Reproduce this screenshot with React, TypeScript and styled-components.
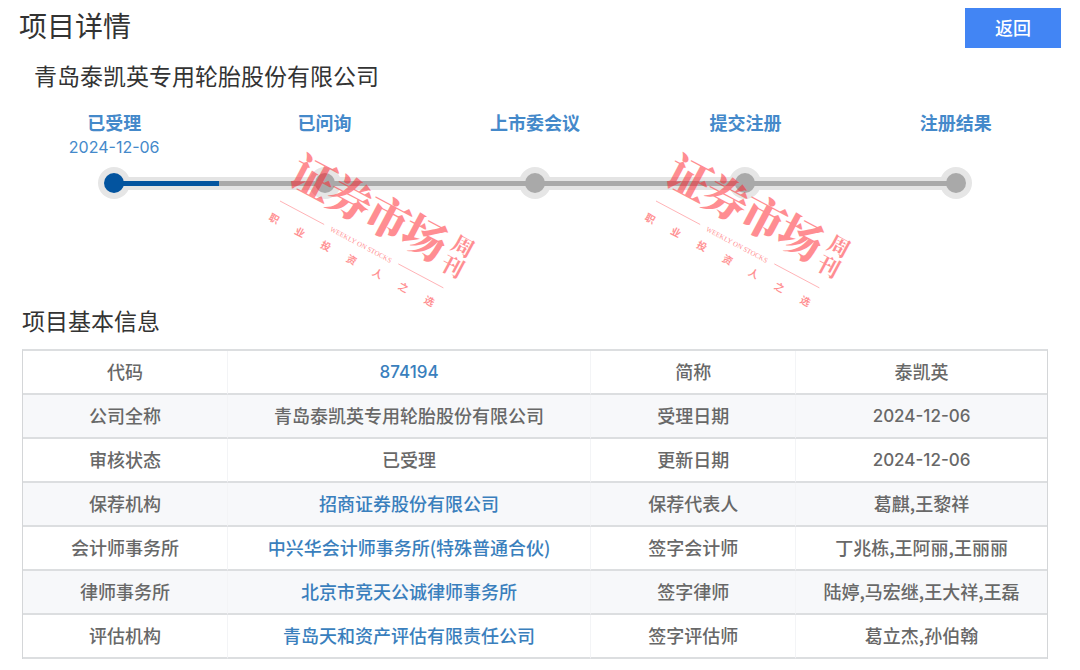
import React from "react";
import styled, { createGlobalStyle } from "styled-components";

const GlobalStyle = createGlobalStyle`
  *, *::before, *::after { box-sizing: border-box; }
  body {
    margin: 0;
    background: #fff;
    color: #333;
    font-family: "Noto Sans CJK SC", sans-serif;
  }
`;

const Page = styled.main`
  padding: 8px 0 12px;
`;

const Header = styled.header`
  display: flex;
  align-items: flex-start;
  justify-content: space-between;
  padding: 0 19px 0 19px;
`;

const Title = styled.h1`
  margin: 0;
  font-size: 28px;
  line-height: 34px;
  font-weight: 400;
`;

const BackButton = styled.button`
  width: 96px;
  height: 40px;
  padding: 0 0 3px;
  border: 0;
  background: #4285f4;
  color: #fff;
  font-family: inherit;
  font-size: 18px;
  font-weight: 500;
  cursor: pointer;
`;

const Subtitle = styled.h2<{ $indent: number; $top: number }>`
  margin: ${(p) => p.$top}px 0 0;
  padding-left: ${(p) => p.$indent}px;
  font-size: 23px;
  line-height: 32px;
  font-weight: 400;
`;

const Progress = styled.section`
  position: relative;
  padding: 19px 19px 0 9px;
`;

const Steps = styled.ol`
  position: relative;
  display: grid;
  grid-template-columns: repeat(5, 1fr);
  margin: 0;
  padding: 0;
  list-style: none;
`;

const Step = styled.li`
  display: flex;
  flex-direction: column;
  align-items: center;
  color: #4489ca;
`;

const StepName = styled.strong`
  font-size: 18px;
  line-height: 24px;
  font-weight: 700;
`;

const StepDate = styled.time`
  height: 26px;
  font-family: Inter, sans-serif;
  font-size: 16px;
  line-height: 26px;
`;

const Halo = styled.span`
  display: flex;
  align-items: center;
  justify-content: center;
  width: 32px;
  height: 32px;
  margin-top: 7px;
  border-radius: 50%;
  background: #e6e6e6;
`;

const Dot = styled.span<{ $active: boolean }>`
  position: relative;
  z-index: 2;
  width: 20px;
  height: 20px;
  border-radius: 50%;
  background: ${(p) => (p.$active ? "#03549f" : "#a9a9a9")};
`;

const RailBed = styled.span`
  position: absolute;
  left: 10%;
  right: 10%;
  bottom: 9px;
  height: 13px;
  background: #e4e4e4;
`;

const Rail = styled.span`
  position: absolute;
  z-index: 1;
  left: 10%;
  right: 10%;
  bottom: 13px;
  height: 5px;
  background: linear-gradient(to right, #03549f 12.5%, #a9a9a9 12.5%);
`;

const Stamp = styled.svg<{ $left: string }>`
  position: absolute;
  z-index: 3;
  top: 24px;
  left: ${(p) => p.$left};
  width: 230px;
  height: 200px;
  pointer-events: none;
`;

const TableWrap = styled.div`
  padding: 13px 32px 0 22px;
`;

const Table = styled.table`
  width: 100%;
  table-layout: fixed;
  border-collapse: separate;
  border-spacing: 0;
  border: 1px solid #d4d6d8;
  border-top: 2px solid #dcdee0;
  border-bottom-width: 0;
  color: #686868;
  font-size: 18px;
  line-height: 26px;
  text-align: center;
`;

const Row = styled.tr`
  &:nth-child(even) { background: #f7f8fa; }
`;

const cell = `
  height: 44px;
  padding: 0 4px 2px;
  border-bottom: 2px solid #dcdee0;
  font-weight: 500;
`;

const Label = styled.th`
  ${cell}
  border-right: 1px solid #f3f4f6;
`;

const Value = styled.td`
  ${cell}
  &:nth-child(2) { border-right: 1px solid #f3f4f6; }
`;

const Numeric = styled.span`
  font-family: Inter, sans-serif;
  font-size: 17px;
`;

const Link = styled.a`
  color: #3a7fbd;
  text-decoration: none;
`;

const steps = [
  { name: "已受理", date: "2024-12-06" },
  { name: "已问询" },
  { name: "上市委会议" },
  { name: "提交注册" },
  { name: "注册结果" },
];

type Info = { label: string; value: string; link?: boolean };

const rows: [Info, Info][] = [
  [{ label: "代码", value: "874194", link: true }, { label: "简称", value: "泰凯英" }],
  [{ label: "公司全称", value: "青岛泰凯英专用轮胎股份有限公司" }, { label: "受理日期", value: "2024-12-06" }],
  [{ label: "审核状态", value: "已受理" }, { label: "更新日期", value: "2024-12-06" }],
  [{ label: "保荐机构", value: "招商证券股份有限公司", link: true }, { label: "保荐代表人", value: "葛麒,王黎祥" }],
  [{ label: "会计师事务所", value: "中兴华会计师事务所(特殊普通合伙)", link: true }, { label: "签字会计师", value: "丁兆栋,王阿丽,王丽丽" }],
  [{ label: "律师事务所", value: "北京市竞天公诚律师事务所", link: true }, { label: "签字律师", value: "陆婷,马宏继,王大祥,王磊" }],
  [{ label: "评估机构", value: "青岛天和资产评估有限责任公司", link: true }, { label: "签字评估师", value: "葛立杰,孙伯翰" }],
];

function InfoCells({ label, value, link }: Info) {
  const text = /^[\d-]+$/.test(value) ? <Numeric>{value}</Numeric> : value;
  return (
    <>
      <Label scope="row">{label}</Label>
      <Value>{link ? <Link href="#">{text}</Link> : text}</Value>
    </>
  );
}

function Watermark({ left }: { left: string }) {
  return (
    <Stamp $left={left} viewBox="0 0 230 200" aria-hidden="true">
      <g
        transform="translate(20 86) rotate(28)"
        fill="#ff1e28"
        opacity="0.5"
        textAnchor="middle"
        fontFamily='"Noto Serif CJK SC", "Noto Sans CJK SC", serif'
      >
        <g fontSize="44" fontWeight="900">
          {["证", "券", "市", "场"].map((c, i) => (
            <text key={c} x={19 + i * 42} y={-19}>{c}</text>
          ))}
        </g>
        <g fontSize="22" fontWeight="700">
          <text x="183" y="-38">周</text>
          <text x="183" y="-15">刊</text>
        </g>
        <path d="M0 0H50M134 0H185" stroke="#ff1e28" strokeWidth="0.6" />
        <text x="92" y="3" fontSize="7" fontFamily='"Liberation Serif", serif'>WEEKLY ON STOCKS</text>
        <g fontSize="10" fontWeight="700" fontFamily='"Noto Sans CJK SC", sans-serif'>
          {["职", "业", "投", "资", "人", "之", "选"].map((c, i) => (
            <text key={c} x={3 + i * 29.3} y={22}>{c}</text>
          ))}
        </g>
      </g>
    </Stamp>
  );
}

export default function App() {
  return (
    <>
      <GlobalStyle />
      <Page>
        <Header>
          <Title>项目详情</Title>
          <BackButton type="button">返回</BackButton>
        </Header>
        <Subtitle $indent={34} $top={11}>青岛泰凯英专用轮胎股份有限公司</Subtitle>
        <Progress>
          <Steps>
            <RailBed as="li" aria-hidden="true" />
            {steps.map((s, i) => (
              <Step key={s.name}>
                <StepName>{s.name}</StepName>
                <StepDate>{s.date}</StepDate>
                <Halo><Dot $active={i === 0} /></Halo>
              </Step>
            ))}
            <Rail as="li" aria-hidden="true" />
          </Steps>
          <Watermark left="24.1%" />
          <Watermark left="58.9%" />
        </Progress>
        <Subtitle $indent={22} $top={105}>项目基本信息</Subtitle>
        <TableWrap>
          <Table>
            <colgroup>
              <col style={{ width: "20%" }} />
              <col style={{ width: "35.5%" }} />
              <col style={{ width: "20%" }} />
              <col style={{ width: "24.5%" }} />
            </colgroup>
            <tbody>
              {rows.map(([a, b]) => (
                <Row key={a.label}>
                  <InfoCells {...a} />
                  <InfoCells {...b} />
                </Row>
              ))}
            </tbody>
          </Table>
        </TableWrap>
      </Page>
    </>
  );
}
